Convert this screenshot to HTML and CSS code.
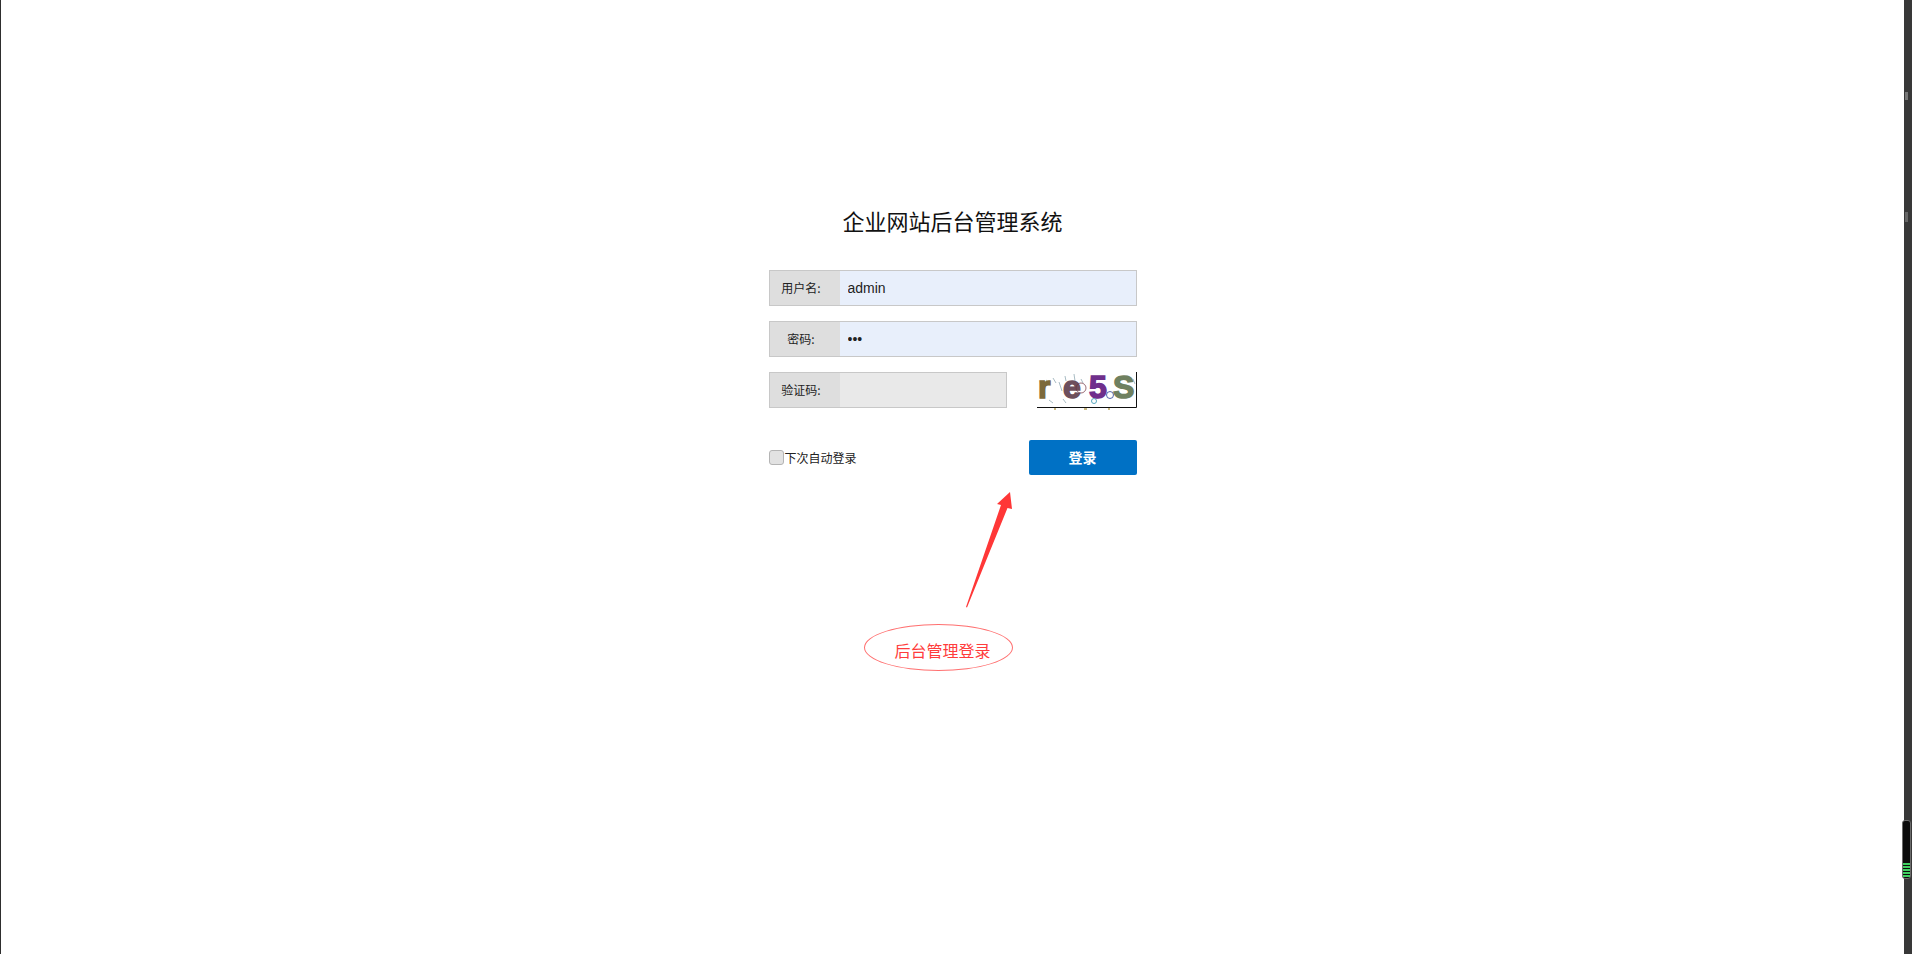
FILE: index.html
```html
<!DOCTYPE html>
<html lang="zh-CN">

<head>
    <meta charset="UTF-8">
    <title>企业网站后台管理系统</title>
    <link rel="stylesheet" href="styles.css">
</head>

<body>
    <div class="edge-left"></div>

    <div class="main">
        <div class="login">
            <h1>企业网站后台管理系统</h1>
            <div class="field">
                <label>用户名:</label>
                <input type="text" value="admin">
            </div>
            <div class="field">
                <label>密码:</label>
                <input type="password" value="123">
            </div>
            <div class="code-row">
                <div class="field code-field">
                    <label>验证码:</label>
                    <input type="text">
                </div>
                <svg class="captcha" width="100" height="38" viewBox="0 0 100 38">
                    <path d="M0 35.500H99.500V0" fill="none" stroke="#111" stroke-width="1" />
                    <path d="M9 8l4 3M16 6l3 5M22 10l3 9M28 4l1 5M37 2l1 7M44 7l2 4M12 28l4 3M26 27l3 4M96 7l2 5" fill="none" stroke="#a9bcc4" stroke-width="1" />
                    <path d="M17 37h2M47 37h3M71 37h2" fill="none" stroke="#b9a45c" stroke-width="1.500" />
                    <text class="cap cap-r" x="1" y="26">r</text>
                    <text class="cap cap-e" x="26" y="26">e</text>
                    <text class="cap cap-5" x="52" y="26">5</text>
                    <text class="cap cap-s" x="76" y="26">S</text>
                    <circle cx="44" cy="16" r="5" fill="none" stroke="#6d2f3c" stroke-width="0.700" />
                    <circle cx="73" cy="23" r="3.500" fill="none" stroke="#2b3f96" stroke-width="0.800" />
                    <circle cx="57" cy="29" r="2.500" fill="none" stroke="#58a8c0" stroke-width="1" />
                </svg>
            </div>
            <div class="actions">
                <label class="remember"><input type="checkbox"><span>下次自动登录</span></label>
                <button type="button">登录</button>
            </div>
        </div>
    </div>

    <div class="edge-right">
        <div class="edge-mark"></div>
        <div class="edge-dots"></div>
    </div>

    <div class="gauge">
        <div class="gauge-bars"></div>
    </div>

    <!-- red annotation drawn over the page -->
    <svg class="arrow" width="60" height="125" viewBox="0 0 60 125">
        <polygon points="49,2 51,19 46.500,18 6,117.500 5,117 40,15 36,14" fill="#ff3737" />
    </svg>
    <div class="note">后台管理登录</div>
</body>

</html>
```

FILE: styles.css
```css
* {
    box-sizing: border-box;
}

html,
body {
    height: 100%;
}

body {
    margin: 0;
    display: flex;
    height: 954px;
    overflow: hidden;
    background-color: #fff;
    font-family: "Liberation Sans", "Noto Sans CJK SC", sans-serif;
    color: #222;
}

.edge-left {
    width: 1px;
    background-color: #2e2e2e;
}

.edge-right {
    width: 8px;
    padding-top: 92px;
    background-color: #383838;
}

.edge-mark {
    width: 3px;
    height: 8px;
    margin-left: 1px;
    background-color: #777;
}

.edge-dots {
    width: 3px;
    height: 10px;
    margin-top: 112px;
    margin-left: 1px;
    background-color: #666;
}

.main {
    flex: 1;
    display: flex;
    justify-content: center;
    padding-top: 205px;
}

.login {
    width: 368px;
}

h1 {
    margin: 0 0 49px;
    height: 16px;
    line-height: 31px;
    font-size: 22px;
    font-weight: normal;
    text-align: center;
    color: #111;
    font-family: "Noto Sans CJK SC", sans-serif;
}

.field {
    display: flex;
    height: 36px;
    margin-bottom: 15px;
    border: 1px solid #c8c8c8;
}

.field label {
    width: 70px;
    padding-right: 7px;
    line-height: 34px;
    font-size: 12px;
    text-align: center;
    background-color: #dedede;
    color: #222;
    font-family: "Noto Sans CJK SC", sans-serif;
}

.field input {
    flex: 1;
    min-width: 0;
    border: 0;
    outline: 0;
    padding: 0 8px;
    font-size: 14px;
    font-family: "Liberation Sans", sans-serif;
    color: #222;
    background-color: #e8effb;
}

.code-row {
    display: flex;
    justify-content: space-between;
    align-items: flex-start;
    height: 36px;
}

.code-field {
    width: 238px;
    margin-bottom: 0;
}

.code-field input {
    background-color: #e9e9e9;
}

.captcha {
    overflow: visible;
}

.cap {
    font-family: "Liberation Sans", sans-serif;
    font-size: 32px;
    font-weight: bold;
    stroke-width: 1.500px;
}

.cap-r {
    fill: #7c6a3c;
    stroke: #7c6a3c;
}

.cap-e {
    fill: #6d4f5c;
    stroke: #6d4f5c;
}

.cap-5 {
    fill: #6f2f8c;
    stroke: #6f2f8c;
}

.cap-s {
    fill: #6f8060;
    stroke: #6f8060;
}

.actions {
    display: flex;
    justify-content: space-between;
    align-items: center;
    margin-top: 32px;
}

.remember {
    display: flex;
    align-items: center;
    font-size: 12px;
    line-height: 16px;
    font-family: "Noto Sans CJK SC", sans-serif;
    color: #222;
}

.remember span {
    margin-left: 1px;
}

.remember input {
    appearance: none;
    width: 15px;
    height: 15px;
    margin: 0;
    border: 1px solid #b4b4b4;
    border-radius: 3px;
    background-color: #e2e2e2;
}

button {
    width: 108px;
    height: 35px;
    padding: 0 0 2px;
    border: 0;
    border-radius: 2px;
    background-color: #0071c5;
    color: #fff;
    font-size: 14px;
    font-weight: bold;
    font-family: "Noto Sans CJK SC", sans-serif;
}

.gauge {
    position: absolute;
    left: 1902px;
    top: 820px;
    width: 9px;
    height: 59px;
    padding: 0 0 1px;
    border: 1px solid #6c6c6c;
    border-radius: 3px;
    background-color: #0c0c0c;
    display: flex;
    align-items: flex-end;
}

.gauge-bars {
    width: 100%;
    height: 14px;
    background: repeating-linear-gradient(#3fd060 0, #3fd060 2px, #0c0c0c 2px, #0c0c0c 3px);
}

.arrow {
    position: absolute;
    left: 961px;
    top: 490px;
}

.note {
    position: absolute;
    left: 864px;
    top: 624px;
    width: 149px;
    height: 47px;
    line-height: 50px;
    padding-left: 8px;
    border: 1px solid #ff7070;
    border-radius: 50%;
    text-align: center;
    font-size: 16px;
    font-family: "Noto Sans CJK SC", sans-serif;
    color: #ff3c3c;
}
```
